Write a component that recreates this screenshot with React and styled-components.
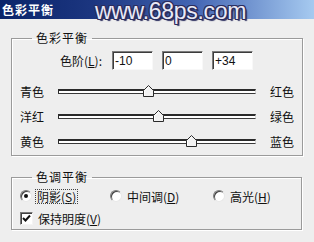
import React from 'react'
import styled, { createGlobalStyle } from 'styled-components'

const GlobalStyle = createGlobalStyle`
    html, body {
        margin: 0;
        padding: 0;
        background: #eeeeee;
    }
    body {
        font-family: "Liberation Sans", "Noto Sans CJK SC", sans-serif;
        font-size: 12px;
        color: #111;
    }
`

const Dialog = styled.div`
    position: relative;
    width: 314px;
    height: 242px;
    overflow: hidden;
    background: #eeeeee;
`

const TitleBar = styled.div`
    height: 19px;
    display: flex;
    align-items: center;
    padding-left: 2px;
    background: linear-gradient(to right, #0a246a 0%, #1c3680 30%, #4466b4 62%, #a6caf0 100%);
    color: #fff;
    font-family: "Noto Sans CJK SC", sans-serif;
    font-weight: 700;
    font-size: 12px;
    letter-spacing: 1px;
`

const Watermark = styled.div`
    position: absolute;
    left: 95px;
    top: 0;
    font-family: "Liberation Sans", Arial, sans-serif;
    font-size: 23px;
    line-height: 23px;
    letter-spacing: -0.3px;
    color: #e9e9f6;
    text-shadow:
        1px 0 0 #2b2e5e, -1px 0 0 #2b2e5e, 0 1px 0 #2b2e5e, 0 -1px 0 #2b2e5e,
        1px 1px 0 #2b2e5e, -1px -1px 0 #2b2e5e, 1px -1px 0 #2b2e5e, -1px 1px 0 #2b2e5e,
        2px 2px 1px #2b2e5e;
    pointer-events: none;
`

const Group = styled.fieldset`
    margin: ${p => p.$top}px 0 0 11px;
    width: ${p => p.$width}px;
    box-sizing: border-box;
    padding: 0 0 ${p => p.$bottom}px 8px;
    border: 1px solid #9a9a9a;
    box-shadow: inset 1px 1px 0 #fff, 1px 1px 0 #fff;
    min-width: 0;
`

const Legend = styled.legend`
    margin-left: 12px;
    padding: 0 4px;
    font-family: "Noto Sans CJK SC", sans-serif;
    font-size: 12px;
    line-height: 14px;
    letter-spacing: 1px;
`

const LevelsRow = styled.div`
    display: flex;
    align-items: center;
    gap: 9px;
    padding: 6px 0 0 40px;
    height: 19px;
`

const LevelsLabel = styled.span`
    font-family: "Noto Sans CJK SC", sans-serif;
    margin-right: 1px;
`

const U = styled.span`
    text-decoration: underline;
    text-underline-offset: 1px;
`

const NumInput = styled.div`
    width: 41px;
    height: 19px;
    box-sizing: border-box;
    background: #fff;
    border-top: 1px solid #7c7c7c;
    border-left: 1px solid #7c7c7c;
    border-right: 1px solid #f8f8f8;
    border-bottom: 1px solid #f8f8f8;
    box-shadow: inset 1px 1px 0 #3c3c3c;
    padding: 2px 0 0 2px;
    font-family: "Liberation Sans", sans-serif;
    font-size: 12px;
    line-height: 14px;
`

const Sliders = styled.div`
    padding-top: 9px;
`

const SliderRow = styled.div`
    display: grid;
    grid-template-columns: 38px 198px 1fr;
    align-items: center;
    height: 25px;
`

const ColorLabel = styled.span`
    font-family: "Noto Sans CJK SC", sans-serif;
    font-size: 12px;
    padding-left: ${p => (p.$right ? 14 : 0)}px;
`

const Track = styled.div`
    position: relative;
    height: 5px;
    box-sizing: border-box;
    background: #fff;
    border-top: 2px solid #2a2a2a;
    border-left: 1px solid #2a2a2a;
    border-bottom: 1px solid #3a3a3a;
    border-right: 1px solid #d8d8d8;
`

const Thumb = styled.svg`
    position: absolute;
    top: -6px;
    width: 11px;
    height: 12px;
`

const Options = styled.div`
    display: grid;
    grid-template-columns: 90px 103px auto;
    row-gap: 6px;
    padding-top: 4px;
`

const Option = styled.label`
    display: flex;
    align-items: center;
    gap: 4px;
    height: 16px;
    font-family: "Noto Sans CJK SC", sans-serif;
    font-size: 12px;
`

const OptionText = styled.span`
    padding: 0 1px;
    outline: ${p => (p.$focus ? '1px dotted #444' : 'none')};
    line-height: 13px;
`

const Radio = styled.span`
    width: 12px;
    height: 12px;
    box-sizing: border-box;
    border-radius: 50%;
    background: #fff;
    border: 1px solid;
    border-color: #7a7a7a #e8e8e8 #e8e8e8 #7a7a7a;
    box-shadow: inset 1px 1px 0 #404040;
    display: flex;
    align-items: center;
    justify-content: center;
    &::after {
        content: '';
        width: 4px;
        height: 4px;
        border-radius: 50%;
        background: ${p => (p.$on ? '#111' : 'transparent')};
    }
`

const Check = styled.span`
    width: 13px;
    height: 13px;
    box-sizing: border-box;
    background: #fff;
    border: 1px solid;
    border-color: #7a7a7a #f4f4f4 #f4f4f4 #7a7a7a;
    box-shadow: inset 1px 1px 0 #404040;
    display: flex;
    align-items: center;
    justify-content: center;
`

const sliders = [
    { left: '青色', right: '红色', value: -10 },
    { left: '洋红', right: '绿色', value: 0 },
    { left: '黄色', right: '蓝色', value: 34 },
]

function ColorSlider({ left, right, value }) {
    const pos = ((value + 100) / 200) * 198 - 5.5
    return (
        <SliderRow>
            <ColorLabel>{left}</ColorLabel>
            <Track>
                <Thumb style={{ left: pos }} viewBox="0 0 11 12">
                    <path d="M0.5 11.5 V5.5 L5.5 0.5 L10.5 5.5 V11.5 Z" fill="#f2f2f2" stroke="#2a2a2a" />
                    <path d="M1.5 10.5 V5.9 L5.5 1.9" fill="none" stroke="#fff" />
                </Thumb>
            </Track>
            <ColorLabel $right>{right}</ColorLabel>
        </SliderRow>
    )
}

export default function App() {
    return (
        <Dialog>
            <GlobalStyle />
            <TitleBar>色彩平衡</TitleBar>
            <Watermark>www.68ps.com</Watermark>

            <Group $top={12} $width={292} $bottom={1}>
                <Legend>色彩平衡</Legend>
                <LevelsRow>
                    <LevelsLabel>色阶(<U>L</U>):</LevelsLabel>
                    <NumInput>-10</NumInput>
                    <NumInput>0</NumInput>
                    <NumInput>+34</NumInput>
                </LevelsRow>
                <Sliders>
                    {sliders.map(s => <ColorSlider key={s.left} {...s} />)}
                </Sliders>
            </Group>

            <Group $top={14} $width={291} $bottom={3}>
                <Legend>色调平衡</Legend>
                <Options>
                    <Option><Radio $on /><OptionText $focus>阴影(<U>S</U>)</OptionText></Option>
                    <Option><Radio /><OptionText>中间调(<U>D</U>)</OptionText></Option>
                    <Option><Radio /><OptionText>高光(<U>H</U>)</OptionText></Option>
                    <Option>
                        <Check>
                            <svg width="9" height="9" viewBox="0 0 9 9">
                                <path d="M1 4 L3.5 6.5 L8 1.5" fill="none" stroke="#111" strokeWidth="2" />
                            </svg>
                        </Check>
                        <OptionText>保持明度(<U>V</U>)</OptionText>
                    </Option>
                </Options>
            </Group>
        </Dialog>
    )
}
